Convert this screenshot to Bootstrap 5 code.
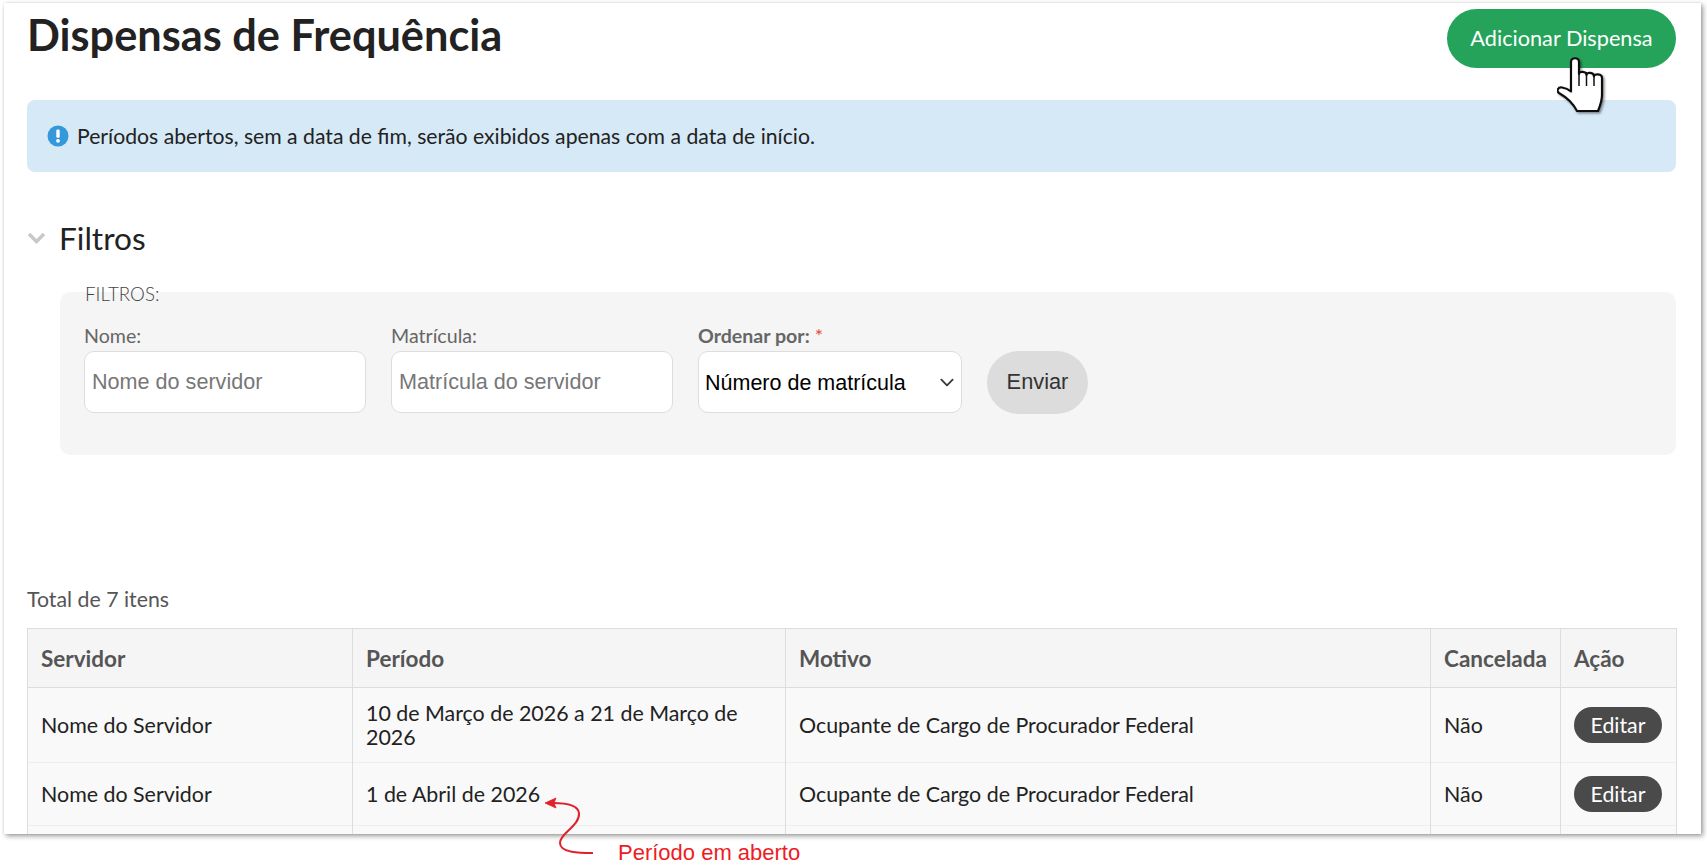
<!DOCTYPE html>
<html lang="pt-BR">
<head>
<meta charset="utf-8">
<title>Dispensas de Frequência</title>
<link rel="stylesheet" href="https://cdn.jsdelivr.net/npm/bootstrap@5.3.0/dist/css/bootstrap.min.css">
<style>
html,body{height:867px;overflow:hidden;background:#fff}
body{font-family:Lato,sans-serif;color:#222;position:relative}
.stage{position:relative;width:1707px;height:867px;overflow:hidden}
.sheet{margin:3px 0 0 4px;width:1697px;height:831px;background:#fff;overflow:hidden;padding:0 25px 0 23px;box-shadow:2px 2px 5px rgba(0,0,0,.4),0 0 2px rgba(0,0,0,.1)}
.head-row{height:97px;padding-top:6px}
.page-title{font-size:43.3px;font-weight:700;color:#222;margin:0;line-height:50px}
.add-btn{background:#26a35a;color:#fff;border:0;border-radius:30px;width:229px;height:59px;font-size:21.7px;font-family:Lato,sans-serif;padding:0}
.add-btn:hover{background:#26a35a;color:#fff}
.info-box{background:#d6e9f7;border-radius:8px;height:72px;padding:0 20px;color:#222;font-size:21.2px;gap:8px;line-height:70px}
.sec-title{margin-top:46px;height:40px;gap:13px;font-size:31.6px;line-height:40px;color:#222}
.filter-box{margin:34px 0 0 33px;height:163px;background:#f5f5f5;border-radius:10px;padding:0 24px;position:relative}
.filter-tag{position:absolute;left:25px;top:-8px;font-size:18.7px;font-weight:300;color:#444;line-height:20px}
.filter-row{padding-top:32px;gap:25px}
.fld-label{font-size:19.6px;line-height:24px;color:#666;margin:0 0 3px;display:block}
.fld-label b{font-weight:700}
.req{color:#e8493a}
.txt-input{width:282px;height:62px;border:1px solid #ddd;border-radius:10px;background:#fff;padding:0 7px;font-family:"Liberation Sans",sans-serif;font-size:21.6px;color:#222}
.txt-input::placeholder{color:#777;opacity:1}
.sel-input{width:264px;height:62px;border:1px solid #ddd;border-radius:10px;background-color:#fff;padding:2px 32px 0 6px;font-family:"Liberation Sans",sans-serif;font-size:21.5px;color:#000;background-position:right 4px center;background-size:20px 15px}
.send-btn{margin-top:27px;width:101px;height:63px;border:0;border-radius:32px;background:#dcdcdc;color:#333;font-family:"Liberation Sans",sans-serif;font-size:21.8px;padding:0}
.send-btn:hover{background:#dcdcdc;color:#333}
.count-line{margin:131px 0 0;font-size:21.3px;line-height:26px;color:#555}
.data-grid{margin:16px 0 0;table-layout:fixed;width:1649px;font-size:21.4px;border-color:#ddd;color:#222}
.data-grid>:not(caption)>*>*{padding:0 13px;vertical-align:middle;background:#f9f9f9;border-color:#ddd;line-height:24px;color:#222;box-shadow:none}
.data-grid thead th{background:#f5f5f5;color:#555;font-weight:700;height:59px;font-size:22.5px;padding-top:2px}
.data-grid tbody tr{border-color:#eee}
.data-grid tbody td{border-bottom-color:#eee}
.row-a>td{height:75px}
.row-b>td{height:63px}
.row-c>td{height:60px}
.edit-btn{background:#4a4a4a;color:#fff;border:0;border-radius:18px;width:88px;height:36px;font-size:21.3px;font-family:Lato,sans-serif;padding:0;line-height:34px}
.edit-btn:hover{background:#4a4a4a;color:#fff}
.overlay{position:absolute;pointer-events:none}
.hand{left:1557px;top:57px}
.arrow{left:540px;top:788px}
.note{left:618px;top:839px;color:#ee1c25;font-family:"Liberation Sans",sans-serif;font-size:22px;line-height:28px;white-space:nowrap}
</style>
</head>
<body>
<div class="stage">
<main class="sheet">
  <header class="head-row d-flex justify-content-between align-items-start">
    <h1 class="page-title">Dispensas de Frequência</h1>
    <button type="button" class="btn add-btn">Adicionar Dispensa</button>
  </header>
  <div class="info-box d-flex align-items-center">
    <svg width="22" height="22" viewBox="0 0 22 22" aria-hidden="true"><circle cx="11" cy="11" r="10.5" fill="#3498db"/><rect x="9.3" y="4.6" width="3.4" height="8.2" rx="1.2" fill="#fff"/><circle cx="11" cy="15.8" r="1.9" fill="#fff"/></svg>
    <span>Períodos abertos, sem a data de fim, serão exibidos apenas com a data de início.</span>
  </div>
  <div class="sec-title d-flex align-items-center">
    <svg width="19" height="12" viewBox="0 0 19 12" aria-hidden="true"><path d="M2 2l7.5 7.5L17 2" fill="none" stroke="#c8c8c8" stroke-width="3.4"/></svg>
    <span>Filtros</span>
  </div>
  <form class="filter-box">
    <span class="filter-tag">FILTROS:</span>
    <div class="filter-row d-flex align-items-start">
      <div><label class="fld-label" for="fn">Nome:</label><input id="fn" class="form-control txt-input" placeholder="Nome do servidor"></div>
      <div><label class="fld-label" for="fm">Matrícula:</label><input id="fm" class="form-control txt-input" placeholder="Matrícula do servidor"></div>
      <div><label class="fld-label" for="fo"><b>Ordenar por:</b> <span class="req">*</span></label><select id="fo" class="form-select sel-input"><option>Número de matrícula</option></select></div>
      <button type="button" class="btn send-btn">Enviar</button>
    </div>
  </form>
  <p class="count-line">Total de 7 itens</p>
  <table class="table table-bordered data-grid">
    <colgroup><col style="width:325px"><col style="width:433px"><col style="width:645px"><col style="width:130px"><col style="width:116px"></colgroup>
    <thead><tr><th>Servidor</th><th>Período</th><th>Motivo</th><th>Cancelada</th><th>Ação</th></tr></thead>
    <tbody>
      <tr class="row-a"><td>Nome do Servidor</td><td>10 de Março de 2026 a 21 de Março de 2026</td><td>Ocupante de Cargo de Procurador Federal</td><td>Não</td><td><button type="button" class="btn edit-btn">Editar</button></td></tr>
      <tr class="row-b"><td>Nome do Servidor</td><td>1 de Abril de 2026</td><td>Ocupante de Cargo de Procurador Federal</td><td>Não</td><td><button type="button" class="btn edit-btn">Editar</button></td></tr>
      <tr class="row-c"><td></td><td></td><td></td><td></td><td></td></tr>
    </tbody>
  </table>
</main>
<svg class="overlay hand" width="52" height="60" viewBox="0 0 52 60" aria-hidden="true"><defs><filter id="sh" x="-20%" y="-20%" width="150%" height="150%"><feDropShadow dx="1.5" dy="1.5" stdDeviation="1.2" flood-color="#000" flood-opacity=".45"/></filter></defs><path filter="url(#sh)" d="M14 31V5c0-5 8-5 8 0V17c0-3 7.500-3 7.500 1c0-3 7.500-3 7.500 1.500c0-3 8-3 8 1.500V38c0 6-2 11-4 16H20C16 46 9 40 2 36c-3-2-1-6 3-5.500c3 .4 6 1.500 9 4z" fill="#fff" stroke="#111" stroke-width="2.200" stroke-linejoin="round"/><path d="M22 17v12M29.500 18v11M37 19.500v9.500" fill="none" stroke="#111" stroke-width="1.500"/></svg>
<svg class="overlay arrow" width="70" height="70" viewBox="0 0 70 70" aria-hidden="true"><path d="M53 65C40 65 20 65 20 55 20 45 40 38 39 25 38 17 25 15 13 15" fill="none" stroke="#e0212b" stroke-width="2"/><path d="M5 15l11-5-2 5 2 5z" fill="#e0212b" stroke="#e0212b" stroke-width=".8"/></svg>
<div class="overlay note">Período em aberto</div>
</div>
<script src="https://cdn.jsdelivr.net/npm/bootstrap@5.3.0/dist/js/bootstrap.bundle.min.js"></script>
</body>
</html>
